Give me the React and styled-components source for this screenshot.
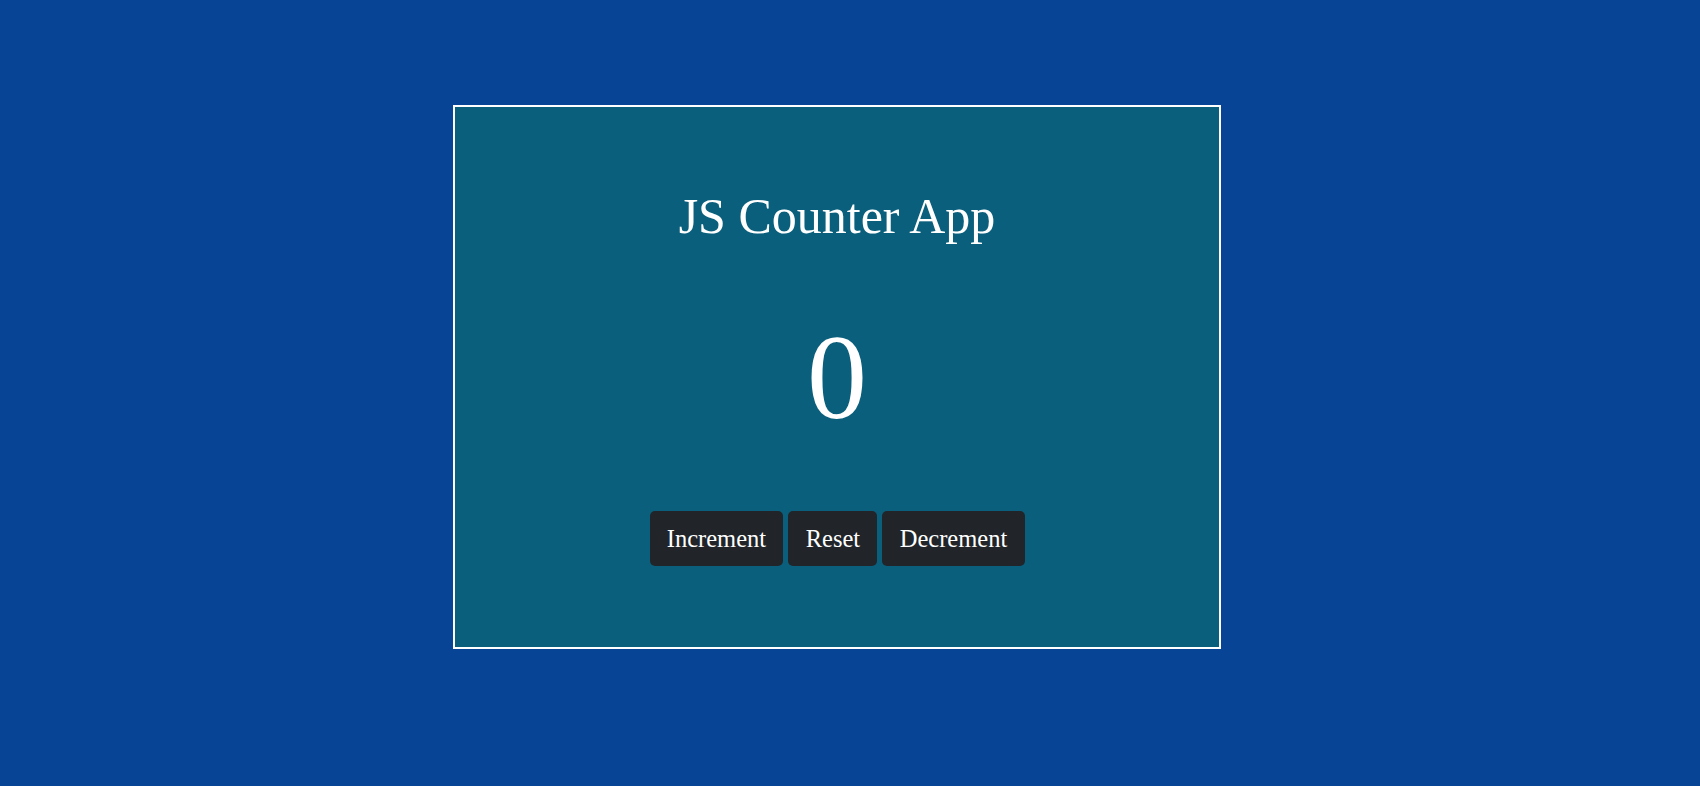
import { useState } from "react";
import styled, { createGlobalStyle } from "styled-components";

const GlobalStyle = createGlobalStyle`
  html, body {
    margin: 0;
    padding: 0;
    background: #074496;
    font-family: "Liberation Serif", "Times New Roman", serif;
  }
`;

const Page = styled.div`
  min-height: 786px;
  display: flex;
  justify-content: center;
  align-items: flex-start;
  padding: 105px 26px 0 0;
  box-sizing: border-box;
`;

const Card = styled.div`
  width: 768px;
  height: 544px;
  box-sizing: border-box;
  border: 2px solid #ffffff;
  background: #095f7c;
  color: #ffffff;
  display: flex;
  flex-direction: column;
  align-items: center;
  padding-top: 82px;
`;

const Title = styled.h1`
  margin: 0;
  font-size: 50px;
  font-weight: 400;
  line-height: 55px;
`;

const Count = styled.div`
  margin-top: 67px;
  font-size: 120px;
  line-height: 133px;
`;

const ButtonRow = styled.div`
  display: flex;
  gap: 5px;
  margin-top: 67px;
`;

const Button = styled.button`
  background: #212529;
  color: #ffffff;
  border: none;
  border-radius: 5px;
  padding: 9.5px 17.3px;
  font-family: inherit;
  font-size: 24.5px;
  line-height: 36px;
  cursor: pointer;

  &:hover {
    background: #2c3136;
  }
`;

const App = () => {
  const [count, setCount] = useState(0);

  return (
    <>
      <GlobalStyle />
      <Page>
        <Card>
          <Title>JS Counter App</Title>
          <Count>{count}</Count>
          <ButtonRow>
            <Button onClick={() => setCount(count + 1)}>Increment</Button>
            <Button onClick={() => setCount(0)}>Reset</Button>
            <Button onClick={() => setCount(count - 1)}>Decrement</Button>
          </ButtonRow>
        </Card>
      </Page>
    </>
  );
};

export default App;
